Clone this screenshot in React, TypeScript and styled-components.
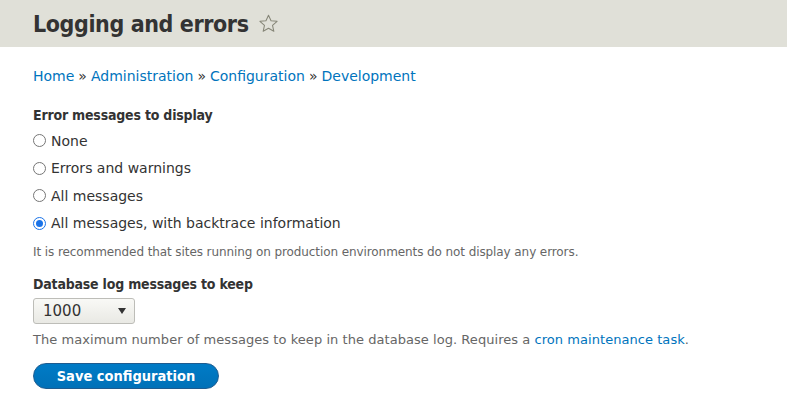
import React from 'react'
import styled, { createGlobalStyle } from 'styled-components'

const GlobalStyle = createGlobalStyle`
  html, body {
    margin: 0;
    padding: 0;
    background: #fff;
  }
  body {
    font-family: "DejaVu Sans", "Noto Sans", sans-serif;
    color: #333;
  }
`

const Header = styled.div`
  background: #e0e0d8;
  height: 47px;
  padding: 0 33px;
  display: flex;
  align-items: center;
`

const Title = styled.h1`
  margin: 0;
  font-family: "DejaVu Sans Condensed", "DejaVu Sans", sans-serif;
  font-size: 23px;
  font-weight: bold;
  letter-spacing: -0.4px;
  color: #333;
`

const Star = styled.svg`
  margin-left: 9px;
  width: 21px;
  height: 21px;
`

const Content = styled.div`
  padding: 21px 33px 0;
`

const Breadcrumb = styled.div`
  font-size: 14px;
  color: #333;
  a {
    color: #0074bd;
    text-decoration: none;
  }
`

const Sep = styled.span`
  margin: 0 4px;
`

const Fieldset = styled.div<{ gap: number }>`
  margin-top: ${({ gap }) => gap}px;
`

const Label = styled.div<{ spaced?: boolean }>`
  font-family: "DejaVu Sans Condensed", "DejaVu Sans", sans-serif;
  font-size: 14px;
  font-weight: bold;
  letter-spacing: -0.2px;
  color: #333;
  margin-bottom: ${({ spaced }) => (spaced ? '6px' : '4px')};
`

const RadioRow = styled.label`
  display: flex;
  align-items: center;
  height: 27.5px;
  font-size: 14px;
  color: #333;
`

const Radio = styled.span<{ checked?: boolean }>`
  width: 11px;
  height: 11px;
  border-radius: 50%;
  border: 1px solid ${({ checked }) => (checked ? '#1a73e8' : '#767676')};
  margin-right: 5px;
  display: flex;
  align-items: center;
  justify-content: center;
  box-sizing: content-box;
  &::after {
    content: '';
    display: ${({ checked }) => (checked ? 'block' : 'none')};
    width: 7px;
    height: 7px;
    border-radius: 50%;
    background: #1a73e8;
  }
`

const Description = styled.div<{ wide?: boolean }>`
  font-size: ${({ wide }) => (wide ? '13px' : '12px')};
  color: #666;
  letter-spacing: ${({ wide }) => (wide ? '0.05px' : '-0.09px')};
  margin-top: ${({ wide }) => (wide ? '8px' : '8px')};
  a {
    color: #0074bd;
    text-decoration: none;
  }
`

const Select = styled.div`
  width: 102px;
  height: 26px;
  box-sizing: border-box;
  border: 1px solid #bdbdb8;
  border-radius: 3px;
  background: linear-gradient(#f9f9f6, #e9e9e4);
  display: flex;
  align-items: center;
  justify-content: space-between;
  padding: 0 8px 0 9px;
  font-size: 15px;
  color: #333;
`

const Arrow = styled.span`
  width: 0;
  height: 0;
  border-left: 4.5px solid transparent;
  border-right: 4.5px solid transparent;
  border-top: 6px solid #333;
`

const Button = styled.button`
  margin-top: 16px;
  width: 186px;
  height: 26px;
  border-radius: 20px;
  border: 1px solid #1e5c90;
  background: linear-gradient(#007bc6, #0071b8);
  color: #fff;
  font-family: "DejaVu Sans Condensed", "DejaVu Sans", sans-serif;
  font-weight: bold;
  font-size: 14.5px;
  padding: 0;
  display: flex;
  align-items: center;
  justify-content: center;
`

const options = [
  'None',
  'Errors and warnings',
  'All messages',
  'All messages, with backtrace information',
]

export default function App() {
  return (
    <>
      <GlobalStyle />
      <Header>
        <Title>Logging and errors</Title>
        <Star viewBox="0 0 24 24">
          <path
            d="M12 2.5l2.9 6.3 6.9.7-5.2 4.6 1.5 6.8L12 17.4l-6.1 3.5 1.5-6.8-5.2-4.6 6.9-.7z"
            fill="none"
            stroke="#868678"
            strokeWidth="1.2"
            strokeLinejoin="round"
          />
        </Star>
      </Header>
      <Content>
        <Breadcrumb>
          <a href="#">Home</a>
          <Sep>»</Sep>
          <a href="#">Administration</a>
          <Sep>»</Sep>
          <a href="#">Configuration</a>
          <Sep>»</Sep>
          <a href="#">Development</a>
        </Breadcrumb>
        <Fieldset gap={23}>
          <Label>Error messages to display</Label>
          {options.map((o, i) => (
            <RadioRow key={o}>
              <Radio checked={i === 3} />
              {o}
            </RadioRow>
          ))}
          <Description>
            It is recommended that sites running on production environments do not display any errors.
          </Description>
        </Fieldset>
        <Fieldset gap={17}>
          <Label spaced>Database log messages to keep</Label>
          <Select>
            1000
            <Arrow />
          </Select>
          <Description wide>
            The maximum number of messages to keep in the database log. Requires a{' '}
            <a href="#">cron maintenance task</a>.
          </Description>
        </Fieldset>
        <Button>Save configuration</Button>
      </Content>
    </>
  )
}
